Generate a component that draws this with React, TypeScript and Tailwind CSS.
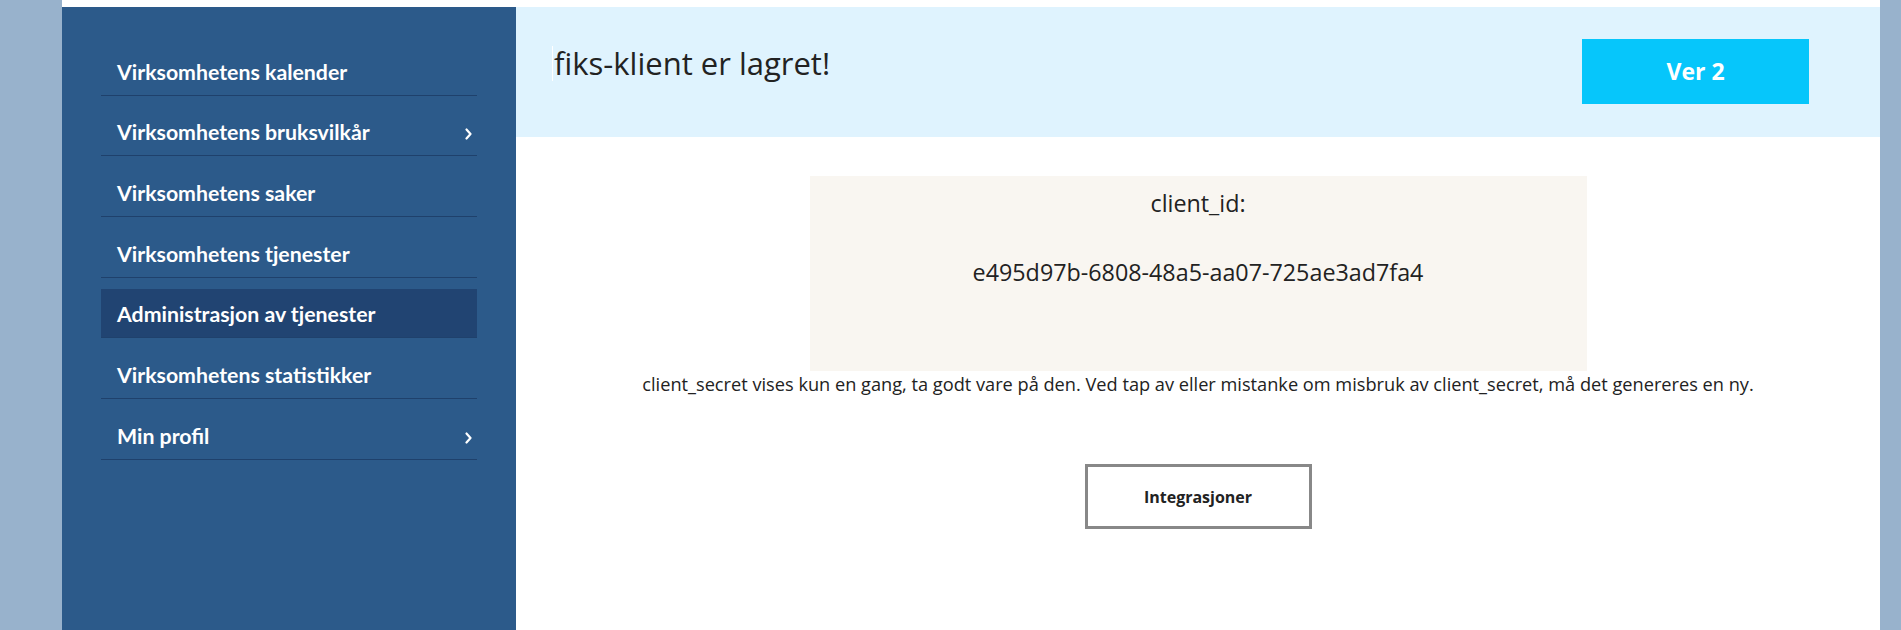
import React from "react"

type NavItem = { label: string; active?: boolean; sub?: boolean }

const items: NavItem[] = [
  { label: "Virksomhetens kalender" },
  { label: "Virksomhetens bruksvilkår", sub: true },
  { label: "Virksomhetens saker" },
  { label: "Virksomhetens tjenester" },
  { label: "Administrasjon av tjenester", active: true },
  { label: "Virksomhetens statistikker" },
  { label: "Min profil", sub: true },
]

function Chevron() {
  return (
    <svg width="7" height="12" viewBox="0 0 7 12" className="mt-[3px]" fill="none">
      <path d="M1.5 1.5 L5.5 6 L1.5 10.5" stroke="white" strokeWidth="2.2" strokeLinecap="round" strokeLinejoin="round" />
    </svg>
  )
}

function Sidebar() {
  return (
    <nav className="w-[454px] shrink-0 bg-[#2c5a8a] pt-[28px] pl-[39px] pr-[39px] font-['Lato',sans-serif]">
      <ul>
        {items.map((item) => (
          <li key={item.label} className="pt-[11.67px]">
            <a
              href="#"
              className={`flex h-[49px] items-center justify-between border-b border-[#1f416c] pl-4 pr-[5px] pt-[3px] text-[21.3px] font-bold text-white ${
                item.active ? "bg-[#214472]" : ""
              }`}
            >
              <span className="leading-[45px]">{item.label}</span>
              {item.sub && <Chevron />}
            </a>
          </li>
        ))}
      </ul>
    </nav>
  )
}

export default function App() {
  return (
    <div className="flex h-screen w-full overflow-hidden bg-white font-['Open_Sans',sans-serif] text-[#222]">
      <div className="w-[62px] shrink-0 bg-[#98b2cc]" />
      <div className="flex flex-1 pt-[7px]">
        <Sidebar />
        <main className="flex flex-1 flex-col">
          <header className="flex h-[130px] items-start justify-between bg-[#dff3fe] pl-[36px] pr-[71px]">
            <h1 className="mt-[35px] flex items-center text-[31px] font-normal leading-[42px]">
              <span className="mr-px h-[35px] w-px bg-white" />
              fiks-klient er lagret!
            </h1>
            <button className="mt-[32px] h-[65px] w-[227px] bg-[#06c6fb] text-[23px] font-bold text-white">
              Ver 2
            </button>
          </header>

          <section className="flex flex-col items-center">
            <div className="mt-[39px] flex h-[195px] w-[777px] flex-col items-center bg-[#f9f6f1] pt-[12px] text-[23.3px] leading-[30px]">
              <p>client_id:</p>
              <p className="mt-[39px]">e495d97b-6808-48a5-aa07-725ae3ad7fa4</p>
            </div>
            <p className="mt-[4px] text-[18.2px] leading-[18px]">
              client_secret vises kun en gang, ta godt vare på den. Ved tap av eller mistanke om misbruk av client_secret, må det genereres en ny.
            </p>
            <button className="mt-[71px] h-[65px] w-[227px] border-[3px] border-[#888] bg-white text-[16px] font-bold text-[#222]">
              Integrasjoner
            </button>
          </section>
        </main>
      </div>
      <div className="w-[21px] shrink-0 bg-[#98b2cc]" />
    </div>
  )
}
